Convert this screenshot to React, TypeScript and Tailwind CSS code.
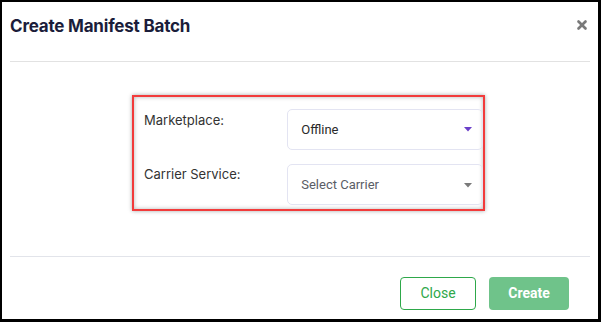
import { X } from 'lucide-react';

function Caret({ color }: { color: string }) {
  return (
    <svg width="8" height="5" viewBox="0 0 8 5" className="absolute right-[10px]">
      <path d="M0 0 L8 0 L4 4.5 Z" fill={color} />
    </svg>
  );
}

export default function App() {
  return (
    <div className="w-[601px] h-[322px] bg-black pt-[2px] pl-[2px] pr-[3px] pb-[3px] overflow-hidden">
      <div className="w-full h-full bg-white flex flex-col" style={{ fontFamily: 'Inter, "Noto Sans", sans-serif' }}>
        {/* header */}
        <div className="h-[59px] flex items-start justify-between pl-[8px] pr-[9px] pt-[12px]">
          <div className="text-[17px] font-bold text-[#1b1d3a] tracking-[-0.2px]">Create Manifest Batch</div>
          <X size={14} strokeWidth={4.5} className="text-[#7a7a7a] mt-[4px]" />
        </div>
        <div className="mx-2 h-px bg-[#e2e2e2]" />

        {/* body */}
        <div className="h-[194px] pt-[33px] pl-[130px]">
          <div className="w-[353px] h-[116px] border-2 border-[#f23b3b] shadow-[0_0_4px_rgba(0,0,0,0.35),inset_0_0_4px_rgba(0,0,0,0.3)] pt-[12px] pl-[10px] overflow-hidden">
            <div className="flex items-start">
              <div className="w-[145px] pt-[2px] text-[13px] text-[#333]">Marketplace:</div>
              <div className="relative flex items-center w-[198px] h-[41px] border border-[#e3e4f2] rounded-[5px] pl-[13px] text-[13px] font-normal text-[#2a2a2a]" style={{ fontFamily: 'Roboto, sans-serif' }}>
                Offline
                <Caret color="#6a3fc9" />
              </div>
            </div>
            <div className="flex items-start mt-[14px]">
              <div className="w-[145px] pt-[1px] text-[13px] text-[#333]">Carrier Service:</div>
              <div className="relative flex items-center w-[198px] h-[41px] border border-[#e3e4f2] rounded-[5px] pl-[13px] pt-[1px] text-[13px] text-[#5a5d66]" style={{ fontFamily: 'Roboto, sans-serif' }}>
                Select Carrier
                <Caret color="#7a7a7a" />
              </div>
            </div>
          </div>
        </div>
        <div className="mx-2 h-px bg-[#e2e4ea]" />

        {/* footer */}
        <div className="flex justify-end gap-[13px] pt-[20px] pr-[29px]" style={{ fontFamily: 'Roboto, sans-serif' }}>
          <button className="w-[76px] h-[33px] border border-[#2ea84a] rounded-[4px] text-[14px] text-[#2ea84a] bg-white">Close</button>
          <button className="w-[80px] h-[33px] rounded-[4px] text-[14px] font-bold text-white bg-[#6fc38a]">Create</button>
        </div>
      </div>
    </div>
  );
}
